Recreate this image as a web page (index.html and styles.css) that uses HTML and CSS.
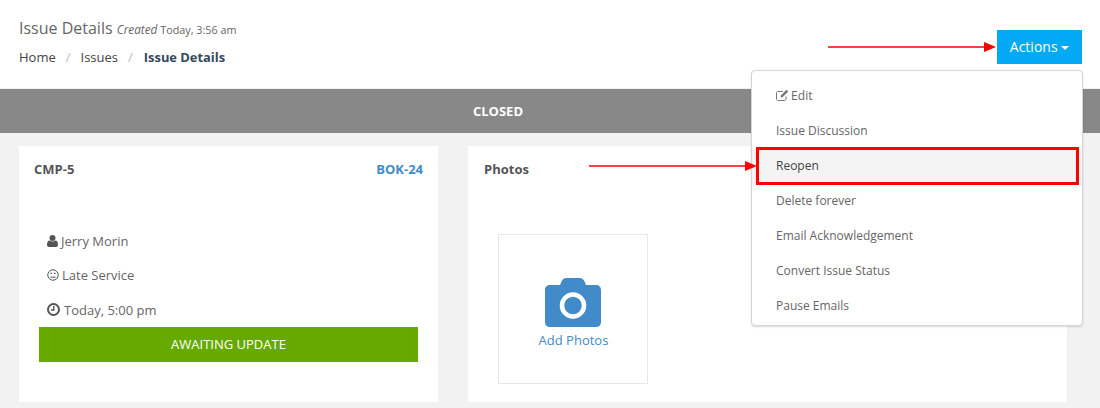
FILE: index.html
```html
<!DOCTYPE html>
<html lang="en">
<head>
    <meta charset="UTF-8">
    <meta name="viewport" content="width=device-width, initial-scale=1.0">
    <title>Issue Details</title>
    <link rel="stylesheet" href="styles.css">
</head>
<body>

    <header class="page-head">
        <div class="head-left">
            <h3 class="page-title">Issue Details <small><em>Created</em> Today, 3:56 am</small></h3>
            <ul class="crumbs">
                <li>Home</li>
                <li class="sep">/</li>
                <li>Issues</li>
                <li class="sep">/</li>
                <li class="current">Issue Details</li>
            </ul>
        </div>
        <button type="button" class="actions-btn">Actions <span class="caret"></span></button>
    </header>

    <div class="status-bar">CLOSED</div>

    <main class="content">
        <section class="card issue-card">
            <div class="card-head">
                <span>CMP-5</span>
                <a class="card-link">BOK-24</a>
            </div>
            <div class="meta">
                <p class="meta-row">
                    <svg class="icon-user" viewBox="0 0 11 12"><circle cx="5.5" cy="3" r="3" fill="#555"/><path d="M0 10c0-3 1-4.500 2.500-4.500 1 .8 2 1.100 3 1.100s2-.3 3-1.100C10 5.500 11 7 11 10c0 1.300-.8 2-2 2H2c-1.200 0-2-.7-2-2z" fill="#555"/></svg>
                    Jerry Morin
                </p>
                <p class="meta-row">
                    <svg class="icon-face" viewBox="0 0 11 11" fill="none" stroke="#555"><circle cx="5.500" cy="5.500" r="4.800" stroke-width=".9"/><path d="M3 7.500h5" stroke-width=".9"/><path d="M3.200 4h1.400M6.400 4h1.400" stroke-width="1.100"/></svg>
                    Late Service
                </p>
                <p class="meta-row">
                    <svg class="icon-clock" viewBox="0 0 13 13" fill="none" stroke="#555"><circle cx="6.500" cy="6.500" r="5.500" stroke-width="2"/><path d="M6.800 3v4H4" stroke-width="1.400"/></svg>
                    Today, 5:00 pm
                </p>
            </div>
            <div class="state-label">AWAITING UPDATE</div>
        </section>

        <section class="card photos-card">
            <div class="card-head"><span>Photos</span></div>
            <a class="add-photo">
                <svg class="icon-camera" viewBox="0 0 56 49">
                    <path d="M5 7h10l1.500-3.500C17.500 1.200 19 0 21 0h14c2 0 3.500 1.200 4.500 3.500L41 7h10c3 0 5 2 5 5v32c0 3-2 5-5 5H5c-3 0-5-2-5-5V12c0-3 2-5 5-5z" fill="#428bca"/>
                    <circle cx="28" cy="27.500" r="11" fill="none" stroke="#fff" stroke-width="4.500"/>
                </svg>
                <span>Add Photos</span>
            </a>
        </section>
    </main>

    <ul class="dropdown">
        <li>
            <svg class="icon-edit" viewBox="0 0 13 12" fill="none" stroke="#777"><path d="M10 7.500V10c0 .9-.6 1.500-1.500 1.500h-6C1.100 11.500.5 10.900.5 10V4c0-.9.6-1.500 1.500-1.500h5"/><path d="M4.500 8.500l.4-2L10.500.8l1.800 1.800L6.500 8.200z" fill="#777" stroke="none"/></svg>
            Edit
        </li>
        <li>Issue Discussion</li>
        <li class="active">Reopen</li>
        <li>Delete forever</li>
        <li>Email Acknowledgement</li>
        <li>Convert Issue Status</li>
        <li>Pause Emails</li>
    </ul>

    <!-- red annotations on top of the screenshot -->
    <div class="highlight-box"></div>
    <svg class="arrow arrow-top" viewBox="0 0 168 12"><path d="M0 6h156" stroke="#f00" stroke-width="1.500"/><path d="M156 1l12 5-12 5z" fill="#f00"/></svg>
    <svg class="arrow arrow-mid" viewBox="0 0 168 12"><path d="M0 6h156" stroke="#f00" stroke-width="1.500"/><path d="M156 1l12 5-12 5z" fill="#f00"/></svg>

</body>
</html>
```

FILE: styles.css
```css
* {
    box-sizing: border-box;
}

body {
    margin: 0;
    height: 408px;
    overflow: hidden;
    position: relative;
    background: #f2f2f2;
    font-family: 'Open Sans', sans-serif;
    font-size: 13px;
    color: #555;
}

.page-head {
    display: flex;
    justify-content: space-between;
    background: #fff;
    height: 88px;
    padding: 17px 18px 0 19px;
}

.page-title {
    margin: 0;
    font-size: 16px;
    font-weight: 400;
    line-height: 22px;
    color: #666;
}

.page-title small {
    font-size: 10.800px;
    color: #666;
}

.page-title em {
    font-size: 11.800px;
}

.crumbs {
    display: flex;
    list-style: none;
    margin: 6px 0 0;
    padding: 0;
    line-height: 20px;
    color: #444;
}

.crumbs .sep {
    color: #bbb;
    margin: 0 10px;
}

.crumbs .current {
    font-weight: 700;
    color: #34495e;
    margin-left: 1px;
    font-size: 12.900px;
}

.actions-btn {
    margin-top: 13px;
    width: 85px;
    height: 34px;
    padding: 0 0 2px;
    border: none;
    background: #03a9f4;
    color: #fff;
    font-family: inherit;
    font-size: 14px;
}

.caret {
    display: inline-block;
    vertical-align: middle;
    border-top: 4px solid #fff;
    border-left: 4px solid transparent;
    border-right: 4px solid transparent;
}

.status-bar {
    margin-top: 1px;
    height: 44px;
    padding-right: 104px;
    background: #888;
    color: #fff;
    font-size: 13px;
    font-weight: 700;
    line-height: 45px;
    text-align: center;
}

.content {
    display: flex;
    align-items: flex-start;
    gap: 30px;
    padding: 13px 33px 0 19px;
}

.card {
    background: #fff;
    height: 256px;
    padding: 14px 15px;
}

.issue-card {
    width: 419px;
}

.photos-card {
    flex: 1;
    padding-left: 16px;
}

.card-head {
    display: flex;
    justify-content: space-between;
    font-weight: 700;
    line-height: 18px;
    color: #555;
}

.card-link {
    color: #428bca;
}

.meta {
    margin-top: 53.800px;
    padding-left: 13px;
}

.meta-row {
    display: flex;
    align-items: center;
    gap: 3px;
    margin: 0 0 16px;
    height: 18.500px;
    color: #666;
}

.meta-row:first-child {
    margin-bottom: 15.500px;
}

.meta-row svg {
    flex: none;
}

.icon-user {
    width: 11px;
    height: 12px;
}

.icon-face {
    width: 12px;
    height: 12px;
}

.icon-clock {
    width: 13px;
    height: 13px;
    margin-right: 1px;
}

.state-label {
    margin: -8.300px 5px 0;
    height: 35px;
    background: #6a0;
    color: #fff;
    line-height: 35px;
    text-align: center;
}

.add-photo {
    display: flex;
    flex-direction: column;
    align-items: center;
    width: 150px;
    height: 150px;
    margin: 56px 0 0 14px;
    padding-top: 43px;
    border: 1px solid #e7e7e7;
    color: #428bca;
}

.add-photo span {
    margin-left: 1px;
}

.icon-camera {
    width: 56px;
    height: 49px;
    margin-bottom: 4px;
}

.dropdown {
    position: absolute;
    left: 751px;
    top: 70px;
    width: 332px;
    height: 256px;
    margin: 0;
    padding: 8px 0;
    list-style: none;
    background: #fff;
    border: 1px solid #d5d5dc;
    border-radius: 4px;
    box-shadow: 0 1px 2px rgba(0, 0, 0, 0.15);
    font-size: 12px;
    color: #666;
}

.dropdown li {
    height: 35px;
    padding-left: 24px;
    line-height: 34px;
}

.dropdown li.active {
    background: #f4f4f4;
    color: #444;
}

.icon-edit {
    width: 13px;
    height: 12px;
    margin-right: -1px;
    vertical-align: -1px;
}

.highlight-box {
    position: absolute;
    left: 756px;
    top: 147px;
    width: 323px;
    height: 38px;
    border: 3px solid #f00;
}

.arrow {
    position: absolute;
    width: 168px;
    height: 12px;
}

.arrow-top {
    left: 828px;
    top: 41px;
}

.arrow-mid {
    left: 589px;
    top: 160px;
}
```
